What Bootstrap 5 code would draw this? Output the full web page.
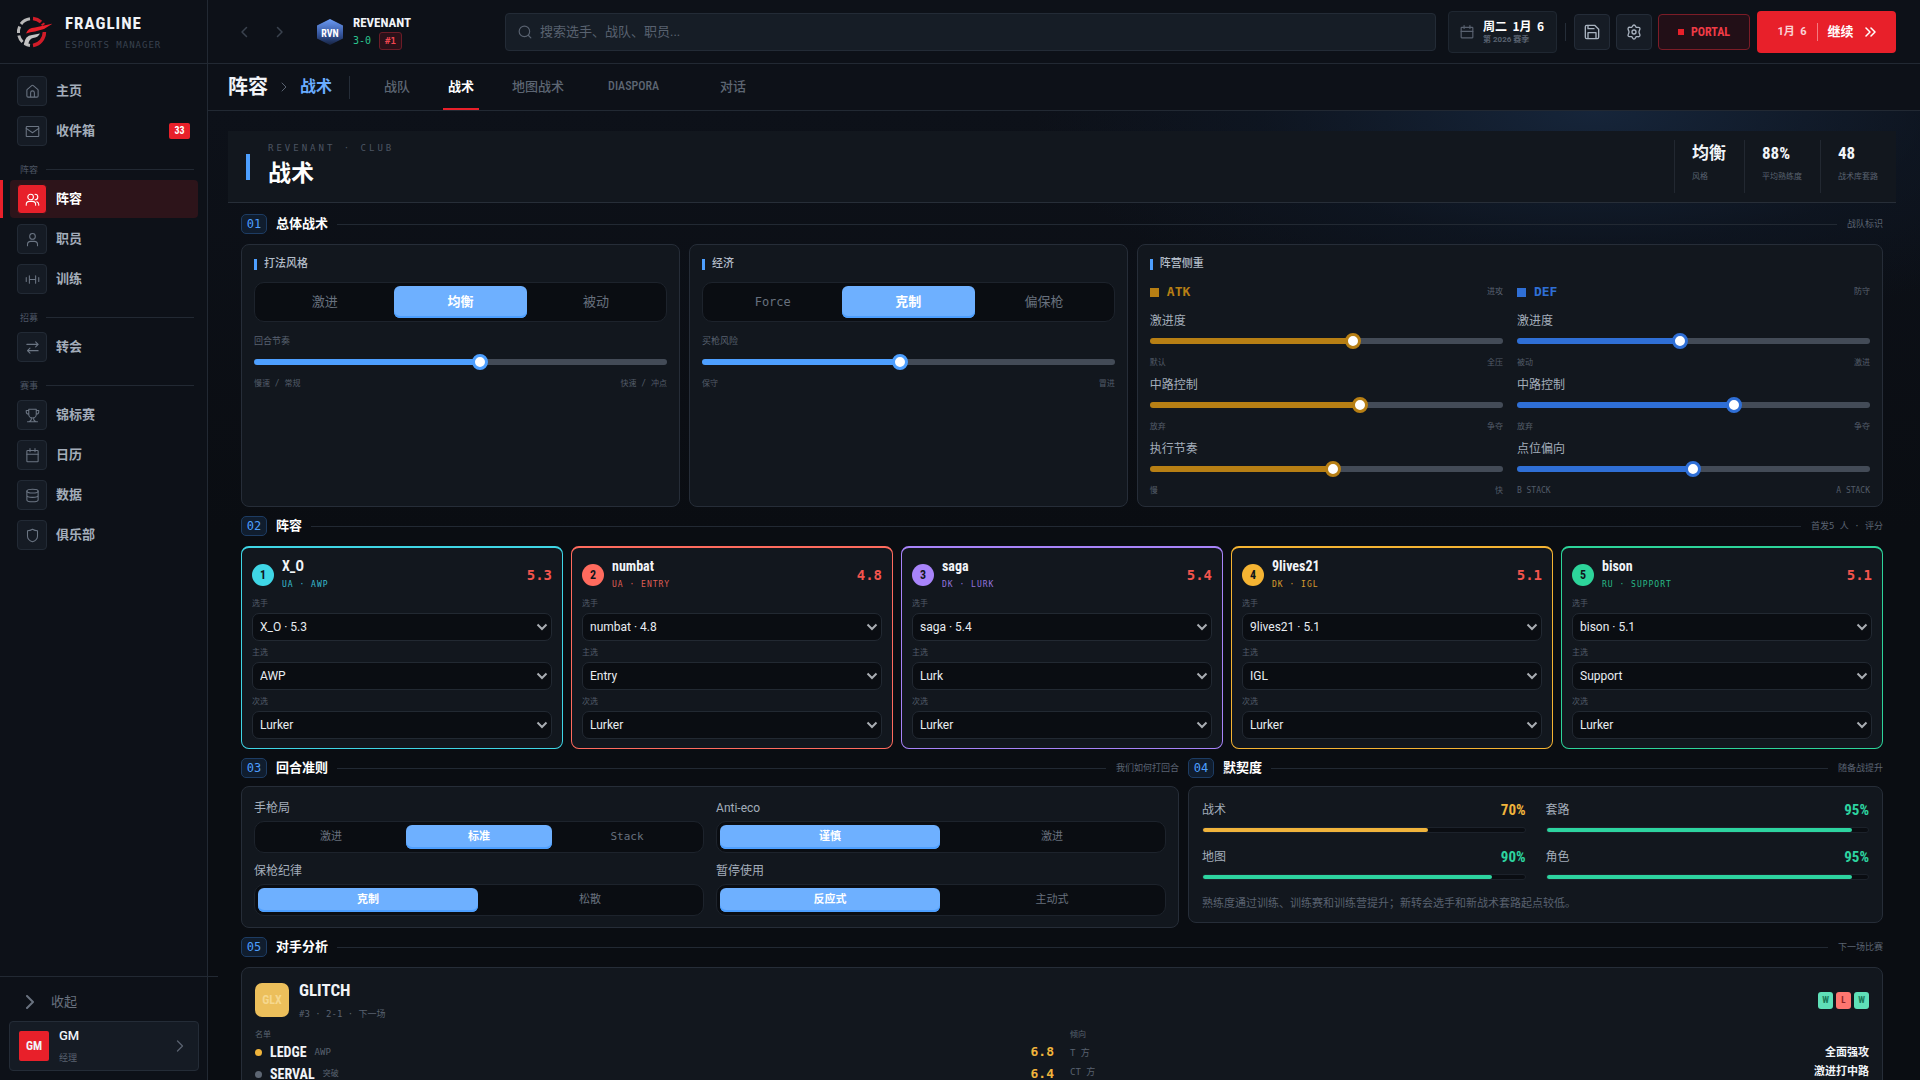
<!DOCTYPE html>
<html lang="zh-CN" data-bs-theme="dark">
<head>
<meta charset="utf-8">
<meta name="viewport" content="width=device-width, initial-scale=1">
<title>FRAGLINE · 战术</title>
<link href="https://cdn.jsdelivr.net/npm/bootstrap@5.3.0/dist/css/bootstrap.min.css" rel="stylesheet">
<style>
:root{--ui:Roboto,"Noto Sans CJK SC",sans-serif;--cond:"Roboto Condensed","Liberation Sans Narrow","Noto Sans CJK SC",sans-serif;--mono:"DejaVu Sans Mono","Noto Sans CJK SC",monospace;
--line:#222933;--panel:#12171e;--deep:#0a0d12;--dim:#596270;--mute:#6b7583;--soft:#a3adba;--blue:#4d9fff;--red:#e8202a;--green:#2dd4a0;--gold:#f0b43c}
body{font-family:var(--ui);font-size:12px;line-height:16px;background:var(--deep);color:#f1f4f8;height:100vh;overflow:hidden}
a{text-decoration:none;color:inherit}
button,select,input{font-family:inherit}
svg{fill:none;stroke:currentColor;stroke-width:2;stroke-linecap:round;stroke-linejoin:round;flex:none}
.f-cond{font-family:var(--cond);font-weight:700}
.f-mono{font-family:var(--mono)}
.c-dim{color:var(--dim)}
.t8{font-size:8px;line-height:12px}.t9{font-size:9px;line-height:12px}.t12{font-size:12px;line-height:16px;color:var(--soft)}
/* sidebar */
.side{width:208px;flex:none;background:#0d1118;border-right:1px solid var(--line)}
.brand{height:64px;padding:0 16px;gap:13px;border-bottom:1px solid var(--line)}
.brand-name{font-size:17px;line-height:20px;letter-spacing:1px}
.brand-sub{font-size:9px;line-height:12px;letter-spacing:1px;color:#39424f;margin-top:6px}
.menu{padding:8px 9px 0 10px;gap:2px}
.menu-item{height:38px;padding:0 7px;gap:9px;font-size:13px;font-weight:700;color:var(--soft);border-radius:4px;position:relative}
.menu-ico{width:30px;height:30px;border:1px solid #222a35;border-radius:4px;background:#151b24;color:var(--mute)}
.menu-ico svg{stroke-width:1.7}
.menu-item.active{background:#2d141a;color:#fff}
.menu-item.active .menu-ico{background:var(--red);color:#fff;border:1px solid #2d141a}
.menu-item.active::before{content:"";position:absolute;left:-10px;top:0;bottom:0;width:3px;background:var(--red)}
.menu-count{width:21px;height:16px;border-radius:2px;background:var(--red);color:#fff;font-size:10px;line-height:16px;text-align:center;margin-left:auto;margin-right:1px}
.menu-sec{height:26px;padding:9px 4px 0 10px;gap:8px;font-size:9px;line-height:12px;color:#4c5564}
.menu-sec::after,.sec-head .rule{content:"";flex:1;height:1px;background:var(--line)}
.side-foot{width:218px;border-top:1px solid var(--line);position:relative;z-index:2;padding:5px 19px 9px 9px}
.collapse-btn{background:none;border:0;height:39px;padding:0 15px;gap:15px;font-size:13px;color:#69727f}
.user-card{height:50px;border:1px solid #242c37;border-radius:4px;background:#151b24;padding:0 14px 0 9px;gap:10px}
.user-pic{width:30px;height:30px;border-radius:2px;background:var(--red);font-size:12px}
.user-name{font-size:13px;font-weight:500}
/* top bar */
.top{height:64px;flex:none;padding:0 24px 0 20px;background:#0d1118;border-bottom:1px solid var(--line)}
.arrow-btn{width:32px;height:32px;background:none;border:0;padding:0;color:#3a424e}
.club{margin:0 0 0 20px;gap:9px;width:189px}
.club-name{font-size:13px;line-height:18px}
.club-rec{font-size:10px;color:#2bc48f}
.rank{border:1px solid #6b1c27;background:#2b1119;color:#f0454f;border-radius:3px;height:18px;line-height:16px;padding:0 5px;font-size:9px}
.search{height:38px;background:#161d26;border:1px solid #232b36;border-radius:4px;padding:0 12px;gap:8px;color:var(--dim)}
.search input{flex:1;background:none;border:0;outline:0;color:#fff;font-size:13px;padding:0}
.search input::placeholder{color:var(--dim);opacity:1}
.date-box{width:109px;height:42px;border:1px solid #1f2731;border-radius:4px;background:#141a22;padding:0 10px 0 11px;gap:9px;color:var(--dim);margin:0 8px 0 12px}
.date-day{font-family:"Noto Sans CJK SC",sans-serif;font-size:12px;font-weight:700;color:#fff;white-space:pre}
.v-rule{width:1px;background:#252d38}
.tool{width:36px;height:36px;border:1px solid #242c38;border-radius:4px;background:#161c25;color:#a9b3c0;padding:0}
.portal{width:92px;height:36px;border:1px solid #7c1c27;border-radius:4px;background:#220f17;color:#f03b46;font-size:12px;gap:7px;padding:0}
.go{width:139px;height:42px;border:0;border-radius:4px;background:var(--red);color:#fff;gap:10px;padding:0;margin-left:1px}
/* tabs */
.tabs{height:47px;flex:none;padding:0 20px;background:#0d1118;border-bottom:1px solid var(--line)}
.tab-link{height:46px;line-height:45px;padding:0 5px;font-size:13px;font-weight:500;color:#5d6673;border-bottom:2px solid transparent}
.tab-link.active{color:#fff;font-weight:700;border-color:var(--red)}
.tab-wide{min-width:90px;padding-left:11px;font-size:12px}
.tab-list{gap:28px;margin-left:29px}
/* content */
.stage{flex:1;min-height:0;overflow:auto;scrollbar-width:none;padding:20px 24px 20px 20px;background:radial-gradient(560px 220px at 81% 0,#16253a,rgba(15,25,40,.5) 60%,rgba(10,13,18,0)),linear-gradient(#0d1119,#0a0d12 420px)}
.hero{height:72px;background:var(--panel);border-bottom:1px solid #272e38;padding-left:18px}
.hero-bar{width:4px;height:26px;background:var(--blue)}
.kicker{font-size:9px;line-height:14px;letter-spacing:3px;color:#4c5562}
.hero h1{font-size:23px;line-height:30px;font-weight:700;margin:4px 0}
.hero-stat{height:53px;padding:4px 18px 0 17px;border-left:1px solid #222831}
.hero-num{font-size:17px;line-height:18px;font-weight:700;margin-bottom:9px}
.inner{padding:0 13px}
.sec-head{height:20px;margin:9px 0 10px}
.sec-no{width:26px;height:20px;border:1px solid #1d3c63;border-radius:5px;background:#101d2e;color:var(--blue);font-size:12px;line-height:18px;text-align:center}
.sec-head h2{font-size:13px;line-height:20px;font-weight:700;margin:0 9px}
.sec-head .rule{height:1px}
.sec-head .note{font-size:9px;margin-left:10px;color:#5b6472}
.grid-a{display:grid;grid-template-columns:1fr 1fr 1.7fr;gap:9px}
.grid-b{display:grid;grid-template-columns:repeat(5,1fr);gap:8px}
.grid-c{display:grid;grid-template-columns:1.35fr 1fr;gap:0 9px;align-items:start}
.grid-c .sec-head{margin-bottom:8px}
.panel{background:var(--panel);border:1px solid #262d38;border-radius:8px;padding:11px 12px}
.panel h3{font-size:11px;line-height:16px;font-weight:500;color:#b3bcc8;margin:0 0 10px;display:flex;align-items:center;gap:7px}
.panel h3::before{content:"";width:3px;height:11px;background:var(--blue)}
.seg{display:flex;gap:2px;border:1px solid #1d232c;border-radius:10px;background:var(--deep);padding:3px;height:40px}
.seg button{flex:1 1 0;border:0;background:none;border-radius:6px;color:#68717e;font-size:13px;padding:0}
.seg button.on{background:#6eb0ff;box-shadow:inset 0 -2px #4d9fff;color:#fff;font-weight:700}
.seg.sm{height:32px}.seg.sm button{font-size:11px}
.sl{--c:var(--blue);--f:calc(8px + (100% - 16px)*var(--v)/100);display:block;width:100%;height:16px;margin:0;appearance:none;-webkit-appearance:none;background:none}
.sl::-webkit-slider-runnable-track{height:6px;border-radius:3px;background:linear-gradient(90deg,var(--c) var(--f),#434b57 var(--f))}
.sl::-webkit-slider-thumb{-webkit-appearance:none;width:16px;height:16px;margin-top:-5px;border-radius:50%;background:#fff;border:3px solid var(--c)}
.sl-atk{--c:#b77f14}.sl-def{--c:#2f6fd6}
.sl-label{display:block;font-size:9px;line-height:12px;color:var(--dim);margin:13px 0 7px}
.ends{display:flex;justify-content:space-between;margin-top:8px;font-size:8px;line-height:12px;font-family:var(--mono);color:#535c69}
.slot-sl{height:64px}
.slot-sl label{display:block;margin-bottom:4px}
.side-head{height:22px;gap:8px;margin:-1px 0 10px}
.side-head strong{font-size:13px}
.sq{width:9px;height:9px;background:currentColor}
.atk{color:#b77f14}.def{color:#2f6fd6}
/* roster cards */
.slot{--k:#3fd6e6;background:var(--panel);border:1px solid var(--k);border-top-width:2px;border-radius:8px;padding:9px 10px}
.slot-no{width:22px;height:22px;border-radius:50%;background:var(--k);color:#10151c;font-size:12px;line-height:22px;text-align:center}
.slot-name{font-size:14px;line-height:18px}
.slot-role{font-size:8px;line-height:12px;letter-spacing:1px;color:var(--k);margin:4px 0 1px;opacity:.85}
.slot-rate{font-size:14px;line-height:18px;font-weight:700;color:#f4544d}
.slot label{display:block;font-size:8px;line-height:12px;color:#535c69;padding:6px 0 3px}
.slot select{display:block;width:100%;height:28px;border:1px solid #222932;border-radius:7px;color:#e8ecf1;font-size:12px;padding:0 7px;appearance:none;background:var(--deep) url("data:image/svg+xml,%3Csvg xmlns='http://www.w3.org/2000/svg' width='12' height='8'%3E%3Cpath d='M1.500 1.500 6 6l4.500-4.500' fill='none' stroke='%23a9adb2' stroke-width='2'/%3E%3C/svg%3E") right 3px center no-repeat}
.rules{display:grid;grid-template-columns:1fr 1fr;gap:10px 12px;padding:13px 12px 11px}
.rules .t12{margin-bottom:5px}
.meter{height:6px;border:1px solid #1c222b;border-radius:3px;background:var(--deep);margin-top:9px}
.meter div{height:4px;border-radius:2px;background:var(--green)}
.pct{font-size:15px;line-height:16px;color:var(--green)}
.gold{color:var(--gold)}.bg-gold{background:var(--gold)!important}
.crest{width:34px;height:34px;border-radius:7px;background:#ecbf5b;color:#f6d88e;font-size:12px}
.res{width:15px;height:17px;border-radius:3px;background:#5fe0b8;color:#187a58;font-size:9px;line-height:17px;text-align:center}
.res.lost{background:#ff7670;color:#8f2326}
.two{display:grid;grid-template-columns:1fr 1fr;column-gap:16px}
.dot{width:7px;height:7px;border-radius:50%;background:#5d6673}
.opp-name{font-size:17px;line-height:20px}
.opp-sub{margin-top:8px}
.pl{height:22px;gap:8px;font-size:14px}
.pl .gold{font-size:13px;font-weight:700}
.tend{height:19px}
.tend strong{font-size:11px}
</style>
<script src="https://cdn.jsdelivr.net/npm/bootstrap@5.3.0/dist/js/bootstrap.bundle.min.js"></script>
</head>
<body class="d-flex">
<aside class="side d-flex flex-column">
  <div class="brand d-flex align-items-center">
    <svg width="36" height="32" viewBox="0 0 36 32" style="stroke-linecap:butt">
      <path d="M14 2.800A13.500 13.500 0 0 0 5 8M3.600 10.500A13.500 13.500 0 0 0 2.500 17M2.800 19.500A13.500 13.500 0 0 0 6.500 26M8.500 27.500A13.500 13.500 0 0 0 14 29.400" stroke="#b9b9b9" stroke-width="3"/>
      <path d="M17 2.600A13.500 13.500 0 0 1 25 6M26.500 7.500l1 1.500M28.400 16A13.500 13.500 0 0 1 17 29.400" stroke="#d01c28" stroke-width="3.500"/>
      <path d="M10 17.500q2-6 9-6l18-4-9 5.500-9 2.500q-5 .5-9 2z" fill="#e8202a" stroke="none"/>
      <path d="M8 28q1-8.500 8-9l8-1.500q-2 4-7 4.500-4 1-5 7z" fill="#c4c4c4" stroke="none"/>
    </svg>
    <div><div class="brand-name f-cond">FRAGLINE</div><div class="brand-sub f-mono text-nowrap">ESPORTS MANAGER</div></div>
  </div>
  <nav class="menu d-flex flex-column flex-grow-1" aria-label="主导航">
    <a href="#" class="menu-item d-flex align-items-center"><span class="menu-ico d-flex align-items-center justify-content-center"><svg width="15" height="15" viewBox="0 0 24 24"><path d="M3 10a2 2 0 0 1 .7-1.500l7-6a2 2 0 0 1 2.600 0l7 6A2 2 0 0 1 21 10v9a2 2 0 0 1-2 2H5a2 2 0 0 1-2-2zM9 21v-7a3 3 0 0 1 6 0v7"/></svg></span>主页</a>
    <a href="#" class="menu-item d-flex align-items-center"><span class="menu-ico d-flex align-items-center justify-content-center"><svg width="15" height="15" viewBox="0 0 24 24"><rect x="2" y="4" width="20" height="16" rx="1"/><path d="m2 7 10 7 10-7"/></svg></span>收件箱<span class="menu-count f-cond">33</span></a>
    <div class="menu-sec d-flex align-items-center">阵容</div>
    <a href="#" class="menu-item active d-flex align-items-center"><span class="menu-ico d-flex align-items-center justify-content-center"><svg width="15" height="15" viewBox="0 0 24 24"><circle cx="9" cy="8" r="4.500"/><path d="M2 21v-1a5 5 0 0 1 5-5h5a5 5 0 0 1 5 5v1M16 3.500a4.500 4.500 0 0 1 0 9M19 15.500a5 5 0 0 1 3 4.500v1"/></svg></span>阵容</a>
    <a href="#" class="menu-item d-flex align-items-center"><span class="menu-ico d-flex align-items-center justify-content-center"><svg width="15" height="15" viewBox="0 0 24 24"><circle cx="12" cy="7" r="4.500"/><path d="M4 22v-2a5 5 0 0 1 5-5h6a5 5 0 0 1 5 5v2"/></svg></span>职员</a>
    <a href="#" class="menu-item d-flex align-items-center"><span class="menu-ico d-flex align-items-center justify-content-center"><svg width="15" height="15" viewBox="0 0 24 24"><path d="M7 6v12M17 6v12M7 12h10M2 9v6M22 9v6"/></svg></span>训练</a>
    <div class="menu-sec d-flex align-items-center">招募</div>
    <a href="#" class="menu-item d-flex align-items-center"><span class="menu-ico d-flex align-items-center justify-content-center"><svg width="15" height="15" viewBox="0 0 24 24"><path d="M3 7h18m-4-4 4 4-4 4M21 17H4m4-4-4 4 4 4"/></svg></span>转会</a>
    <div class="menu-sec d-flex align-items-center">赛事</div>
    <a href="#" class="menu-item d-flex align-items-center"><span class="menu-ico d-flex align-items-center justify-content-center"><svg width="15" height="15" viewBox="0 0 24 24"><path d="M6 2h12v8a6 6 0 0 1-12 0zM6 4H2v2a4 4 0 0 0 4 4M18 4h4v2a4 4 0 0 1-4 4M10 15.500v3.500l-3 3M14 15.500v3.500l3 3M4 22h16"/></svg></span>锦标赛</a>
    <a href="#" class="menu-item d-flex align-items-center"><span class="menu-ico d-flex align-items-center justify-content-center"><svg width="15" height="15" viewBox="0 0 24 24"><rect x="3" y="4" width="18" height="18" rx="1"/><path d="M3 10h18M8 1v5M16 1v5"/></svg></span>日历</a>
    <a href="#" class="menu-item d-flex align-items-center"><span class="menu-ico d-flex align-items-center justify-content-center"><svg width="15" height="15" viewBox="0 0 24 24"><ellipse cx="12" cy="5" rx="9" ry="3"/><path d="M3 5v14c0 4 18 4 18 0V5M3 12c0 4 18 4 18 0"/></svg></span>数据</a>
    <a href="#" class="menu-item d-flex align-items-center"><span class="menu-ico d-flex align-items-center justify-content-center"><svg width="15" height="15" viewBox="0 0 24 24"><path d="M12 2c3 2 5 2.500 8 2.500V13c0 5-4 7.500-8 9-4-1.500-8-4-8-9V4.500C7 4.500 9 4 12 2z"/></svg></span>俱乐部</a>
  </nav>
  <div class="side-foot">
    <button class="collapse-btn d-flex align-items-center"><svg width="12" height="14" viewBox="0 0 12 14"><path d="m3 1 6 6-6 6"/></svg>收起</button>
    <a href="#" class="user-card d-flex align-items-center">
      <span class="user-pic f-cond d-flex align-items-center justify-content-center">GM</span>
      <span class="flex-grow-1"><span class="d-block user-name">GM</span><span class="d-block t9 c-dim mt-2">经理</span></span>
      <svg width="8" height="12" viewBox="0 0 8 12" class="c-dim"><path d="m1.500 1 5 5-5 5" stroke-width="1.300"/></svg>
    </a>
  </div>
</aside>
<div class="d-flex flex-column flex-grow-1" style="min-width:0">
  <header class="top d-flex align-items-center">
    <div class="d-flex gap-1">
      <button class="arrow-btn" aria-label="后退"><svg width="8" height="12" viewBox="0 0 8 12"><path d="M6.500 1.500 2 6l4.500 4.500" stroke-width="1.500"/></svg></button>
      <button class="arrow-btn" aria-label="前进"><svg width="8" height="12" viewBox="0 0 8 12"><path d="M1.500 1.500 6 6l-4.500 4.500" stroke-width="1.500"/></svg></button>
    </div>
    <div class="club d-flex align-items-center">
      <svg width="28" height="28" viewBox="0 0 28 28"><defs><linearGradient id="hx" x2="0" y2="1"><stop stop-color="#6c9cf5"/><stop offset=".6" stop-color="#34549b"/><stop offset="1" stop-color="#16233f"/></linearGradient></defs><path d="M14 1 27 7.500v13L14 27 1 20.500v-13z" fill="url(#hx)" stroke="none"/><text x="14" y="19" text-anchor="middle" fill="#fff" stroke="none" font-size="10" font-weight="700" font-family="Roboto Condensed, Liberation Sans Narrow, sans-serif">RVN</text></svg>
      <div><div class="club-name f-cond">REVENANT</div><div class="club-rec d-flex align-items-center gap-2 f-mono"><span>3-0</span><span class="rank fw-bold">#1</span></div></div>
    </div>
    <label class="search d-flex align-items-center flex-grow-1"><svg width="14" height="14" viewBox="0 0 24 24"><circle cx="11" cy="11" r="9"/><path d="m18 18 4 4"/></svg><input type="text" placeholder="搜索选手、战队、职员..." aria-label="搜索"></label>
    <div class="date-box d-flex align-items-center"><svg width="14" height="14" viewBox="0 0 24 24"><rect x="2" y="4" width="20" height="18" rx="1"/><path d="M2 11h20M7 1v5M17 1v5"/></svg><div class="text-nowrap"><div class="date-day">周二  1月  6</div><div class="t8 fw-bold">第 2026 赛季</div></div></div>
    <div class="v-rule" style="height:18px"></div>
    <div class="d-flex align-items-center ms-2" style="gap:6px">
      <button class="tool" aria-label="保存"><svg width="16" height="16" viewBox="0 0 24 24"><path d="M2 4a2 2 0 0 1 2-2h12l6 6v12a2 2 0 0 1-2 2H4a2 2 0 0 1-2-2zM6 2v5h9M6 22v-9h12v9"/></svg></button>
      <button class="tool" aria-label="设置"><svg width="16" height="16" viewBox="0 0 24 24"><circle cx="12" cy="12" r="3"/><path d="M12 1.500c2.500 0 2 2.800 3.500 3.500s4-1.200 5.200 1-1.200 3.200-1.200 6 2.400 3.700 1.200 6-3.700.2-5.200 1-1 3.500-3.500 3.500-2-2.700-3.500-3.500-4 1.200-5.200-1 1.200-3.200 1.200-6-2.400-3.700-1.200-6 3.700-.2 5.200-1 1-3.500 3.500-3.500z"/></svg></button>
      <button class="portal f-cond d-flex align-items-center justify-content-center"><span style="width:6px;height:6px;background:#e8202a"></span>PORTAL</button>
      <button class="go d-flex align-items-center justify-content-center"><span class="fw-bold" style="font-size:11px;opacity:.8">1月 &nbsp;6</span><span class="v-rule" style="height:18px;background:#f57a80"></span><span class="fw-bold" style="font-size:13px">继续</span><svg width="12" height="10" viewBox="0 0 12 10"><path d="m2 1 4 4-4 4M7 1l4 4-4 4" stroke-width="1.500"/></svg></button>
    </div>
  </header>
  <nav class="tabs d-flex align-items-center" aria-label="阵容页面">
    <strong style="font-size:20px;line-height:46px">阵容</strong>
    <svg width="6" height="10" viewBox="0 0 6 10" style="margin:0 13px" class="c-dim"><path d="m1 1 4 4-4 4" stroke-width="1"/></svg>
    <strong style="font-size:16px;line-height:46px;color:#6aacff">战术</strong>
    <span class="v-rule" style="height:23px;margin-left:17px"></span>
    <div class="tab-list d-flex align-items-center">
      <a href="#" class="tab-link">战队</a><a href="#" class="tab-link active" aria-current="page">战术</a><a href="#" class="tab-link">地图战术</a><a href="#" class="tab-link tab-wide f-cond">DIASPORA</a><a href="#" class="tab-link">对话</a>
    </div>
  </nav>
  <main class="stage">
    <div class="hero d-flex align-items-center">
      <div class="hero-bar"></div>
      <div class="flex-grow-1" style="margin-left:18px"><div class="kicker f-mono">REVENANT · CLUB</div><h1>战术</h1></div>
      <div class="hero-stat"><div class="hero-num">均衡</div><div class="t8 c-dim">风格</div></div>
      <div class="hero-stat"><div class="hero-num f-cond">88%</div><div class="t8 c-dim">平均熟练度</div></div>
      <div class="hero-stat"><div class="hero-num f-cond">48</div><div class="t8 c-dim">战术库套路</div></div>
    </div>
    <div class="inner">
      <div class="sec-head d-flex align-items-center" style="margin-top:11px"><span class="sec-no f-mono">01</span><h2>总体战术</h2><span class="rule"></span><span class="note">战队标识</span></div>
      <div class="grid-a">
        <section class="panel">
          <h3>打法风格</h3>
          <div class="seg" role="group" aria-label="打法风格"><button>激进</button><button class="on">均衡</button><button>被动</button></div>
          <label class="sl-label" for="tempo">回合节奏</label>
          <input id="tempo" class="sl" type="range" value="55" style="--v:55">
          <div class="ends"><span>慢速 / 常规</span><span>快速 / 冲点</span></div>
        </section>
        <section class="panel">
          <h3>经济</h3>
          <div class="seg" role="group" aria-label="经济"><button class="f-mono" style="font-size:12px">Force</button><button class="on">克制</button><button>偏保枪</button></div>
          <label class="sl-label" for="risk">买枪风险</label>
          <input id="risk" class="sl" type="range" value="48" style="--v:48">
          <div class="ends"><span>保守</span><span>冒进</span></div>
        </section>
        <section class="panel" style="padding-bottom:1px">
          <h3>阵营侧重</h3>
          <div class="two" style="column-gap:14px">
            <div>
              <div class="side-head atk d-flex align-items-center f-mono"><span class="sq"></span><strong class="flex-grow-1">ATK</strong><span class="t8 c-dim">进攻</span></div>
              <div class="slot-sl"><label class="t12" for="a1">激进度</label><input id="a1" class="sl sl-atk" type="range" value="58" style="--v:58"><div class="ends"><span>默认</span><span>全压</span></div></div>
              <div class="slot-sl"><label class="t12" for="a2">中路控制</label><input id="a2" class="sl sl-atk" type="range" value="60" style="--v:60"><div class="ends"><span>放弃</span><span>争夺</span></div></div>
              <div class="slot-sl"><label class="t12" for="a3">执行节奏</label><input id="a3" class="sl sl-atk" type="range" value="52" style="--v:52"><div class="ends"><span>慢</span><span>快</span></div></div>
            </div>
            <div>
              <div class="side-head def d-flex align-items-center f-mono"><span class="sq"></span><strong class="flex-grow-1">DEF</strong><span class="t8 c-dim">防守</span></div>
              <div class="slot-sl"><label class="t12" for="d1">激进度</label><input id="d1" class="sl sl-def" type="range" value="46" style="--v:46"><div class="ends"><span>被动</span><span>激进</span></div></div>
              <div class="slot-sl"><label class="t12" for="d2">中路控制</label><input id="d2" class="sl sl-def" type="range" value="62" style="--v:62"><div class="ends"><span>放弃</span><span>争夺</span></div></div>
              <div class="slot-sl"><label class="t12" for="d3">点位偏向</label><input id="d3" class="sl sl-def" type="range" value="50" style="--v:50"><div class="ends"><span>B STACK</span><span>A STACK</span></div></div>
            </div>
          </div>
        </section>
      </div>
      <div class="sec-head d-flex align-items-center"><span class="sec-no f-mono">02</span><h2>阵容</h2><span class="rule"></span><span class="note f-mono">首发5 人 · 评分</span></div>
      <div class="grid-b">
        <section class="slot">
          <div class="d-flex align-items-center gap-2"><span class="slot-no f-cond">1</span><div class="flex-grow-1"><div class="slot-name f-cond">X_O</div><div class="slot-role f-mono">UA · AWP</div></div><span class="slot-rate f-mono">5.3</span></div>
          <label for="p1">选手</label><select id="p1"><option>X_O · 5.3</option></select>
          <label for="m1">主选</label><select id="m1"><option>AWP</option></select>
          <label for="s1">次选</label><select id="s1"><option>Lurker</option></select>
        </section>
        <section class="slot" style="--k:#ff6b5e">
          <div class="d-flex align-items-center gap-2"><span class="slot-no f-cond">2</span><div class="flex-grow-1"><div class="slot-name f-cond">numbat</div><div class="slot-role f-mono">UA · ENTRY</div></div><span class="slot-rate f-mono">4.8</span></div>
          <label for="p2">选手</label><select id="p2"><option>numbat · 4.8</option></select>
          <label for="m2">主选</label><select id="m2"><option>Entry</option></select>
          <label for="s2">次选</label><select id="s2"><option>Lurker</option></select>
        </section>
        <section class="slot" style="--k:#a884fa">
          <div class="d-flex align-items-center gap-2"><span class="slot-no f-cond">3</span><div class="flex-grow-1"><div class="slot-name f-cond">saga</div><div class="slot-role f-mono">DK · LURK</div></div><span class="slot-rate f-mono">5.4</span></div>
          <label for="p3">选手</label><select id="p3"><option>saga · 5.4</option></select>
          <label for="m3">主选</label><select id="m3"><option>Lurk</option></select>
          <label for="s3">次选</label><select id="s3"><option>Lurker</option></select>
        </section>
        <section class="slot" style="--k:#f5b433">
          <div class="d-flex align-items-center gap-2"><span class="slot-no f-cond">4</span><div class="flex-grow-1"><div class="slot-name f-cond">9lives21</div><div class="slot-role f-mono">DK · IGL</div></div><span class="slot-rate f-mono">5.1</span></div>
          <label for="p4">选手</label><select id="p4"><option>9lives21 · 5.1</option></select>
          <label for="m4">主选</label><select id="m4"><option>IGL</option></select>
          <label for="s4">次选</label><select id="s4"><option>Lurker</option></select>
        </section>
        <section class="slot" style="--k:#2dd49a">
          <div class="d-flex align-items-center gap-2"><span class="slot-no f-cond">5</span><div class="flex-grow-1"><div class="slot-name f-cond">bison</div><div class="slot-role f-mono">RU · SUPPORT</div></div><span class="slot-rate f-mono">5.1</span></div>
          <label for="p5">选手</label><select id="p5"><option>bison · 5.1</option></select>
          <label for="m5">主选</label><select id="m5"><option>Support</option></select>
          <label for="s5">次选</label><select id="s5"><option>Lurker</option></select>
        </section>
      </div>
      <div class="grid-c">
        <div>
          <div class="sec-head d-flex align-items-center"><span class="sec-no f-mono">03</span><h2>回合准则</h2><span class="rule"></span><span class="note">我们如何打回合</span></div>
          <section class="panel rules">
            <div><div class="t12">手枪局</div><div class="seg sm" role="group" aria-label="手枪局"><button>激进</button><button class="on">标准</button><button class="f-mono">Stack</button></div></div>
            <div><div class="t12">Anti-eco</div><div class="seg sm" role="group" aria-label="Anti-eco"><button class="on">谨慎</button><button>激进</button></div></div>
            <div><div class="t12">保枪纪律</div><div class="seg sm" role="group" aria-label="保枪纪律"><button class="on">克制</button><button>松散</button></div></div>
            <div><div class="t12">暂停使用</div><div class="seg sm" role="group" aria-label="暂停使用"><button class="on">反应式</button><button>主动式</button></div></div>
          </section>
        </div>
        <div>
          <div class="sec-head d-flex align-items-center"><span class="sec-no f-mono">04</span><h2>默契度</h2><span class="rule"></span><span class="note">随备战提升</span></div>
          <section class="panel" style="padding:15px 13px 10px">
            <div class="two" style="column-gap:20px;row-gap:16px">
              <div><div class="t12 d-flex justify-content-between">战术<span class="pct f-cond gold">70%</span></div><div class="meter"><div class="bg-gold" style="width:70%"></div></div></div>
              <div><div class="t12 d-flex justify-content-between">套路<span class="pct f-cond">95%</span></div><div class="meter"><div style="width:95%"></div></div></div>
              <div><div class="t12 d-flex justify-content-between">地图<span class="pct f-cond">90%</span></div><div class="meter"><div style="width:90%"></div></div></div>
              <div><div class="t12 d-flex justify-content-between">角色<span class="pct f-cond">95%</span></div><div class="meter"><div style="width:95%"></div></div></div>
            </div>
            <p class="mb-0 mt-3 c-dim" style="font-size:11px">熟练度通过训练、训练赛和训练营提升；新转会选手和新战术套路起点较低。</p>
          </section>
        </div>
      </div>
      <div class="sec-head d-flex align-items-center"><span class="sec-no f-mono">05</span><h2>对手分析</h2><span class="rule"></span><span class="note">下一场比赛</span></div>
      <section class="panel" style="padding:12px 13px">
        <div class="d-flex align-items-center" style="gap:10px">
          <span class="crest f-cond d-flex align-items-center justify-content-center">GLX</span>
          <div class="flex-grow-1"><div class="f-cond opp-name">GLITCH</div><div class="t9 f-mono c-dim opp-sub">#3 · 2-1 · 下一场</div></div>
          <div class="d-flex f-cond" style="gap:3px"><span class="res">W</span><span class="res lost">L</span><span class="res">W</span></div>
        </div>
        <div class="two" style="margin-top:9px">
          <div>
            <div class="t8 c-dim">名单</div>
            <div class="pl d-flex align-items-center"><span class="dot bg-gold"></span><span class="f-cond">LEDGE</span><span class="f-mono t9 c-dim flex-grow-1">AWP</span><span class="f-mono gold">6.8</span></div>
            <div class="pl d-flex align-items-center"><span class="dot"></span><span class="f-cond">SERVAL</span><span class="f-mono t8 c-dim flex-grow-1">突破</span><span class="f-mono gold">6.4</span></div>
          </div>
          <div>
            <div class="t8 c-dim" style="margin-bottom:2px">倾向</div>
            <div class="tend d-flex align-items-center justify-content-between"><span class="t9 f-mono c-dim">T 方</span><strong>全面强攻</strong></div>
            <div class="tend d-flex align-items-center justify-content-between"><span class="t9 f-mono c-dim">CT 方</span><strong>激进打中路</strong></div>
          </div>
        </div>
      </section>
    </div>
  </main>
</div>
</body>
</html>
